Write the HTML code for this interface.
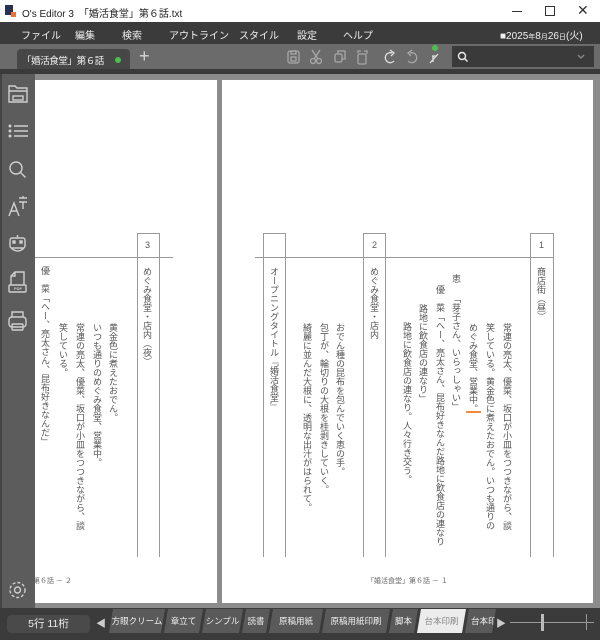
<!DOCTYPE html>
<html><head><meta charset="utf-8"><style>
*{margin:0;padding:0;box-sizing:border-box}
body{width:600px;height:640px;overflow:hidden;background:#3b3b3b;font-family:"Liberation Sans","Noto Sans CJK JP",sans-serif;position:relative}
.a{position:absolute}
.v{position:absolute;writing-mode:vertical-rl;font-size:9px;line-height:10px;color:#555;white-space:nowrap;font-family:"Liberation Sans","Noto Sans CJK JP",sans-serif}
.m{position:absolute;top:27px;font-size:10px;color:#f0f0f0}
.ln{position:absolute;background:#9a9a9a}
.tab{position:absolute;top:609px;height:24px;background:#5a5a5a;color:#f0f0f0;font-size:8.5px;line-height:24px;text-align:center;white-space:nowrap;overflow:hidden;clip-path:polygon(4px 0,100% 0,calc(100% - 4px) 100%,0 100%)}
svg{position:absolute}
</style></head><body>
<div class="a" style="left:0;top:0;width:600px;height:22px;background:#fff"></div>
<div class="a" style="left:5px;top:5px;width:8px;height:10px;background:#2a3050"></div>
<div class="a" style="left:11px;top:12px;width:5px;height:5px;background:#e8743a"></div>
<div class="a" style="left:22px;top:5px;font-size:10px;color:#222">O's Editor 3　「婚活食堂」第６話.txt</div>
<div class="a" style="left:512px;top:11px;width:10px;height:1px;background:#333"></div>
<div class="a" style="left:545px;top:6px;width:10px;height:10px;border:1px solid #333"></div>
<div class="a" style="left:577px;top:2px;font-size:14px;color:#333">✕</div>
<div class="a" style="left:0;top:22px;width:600px;height:22px;background:#3b3b3b"></div>
<div class="m" style="left:21px">ファイル</div>
<div class="m" style="left:75px">編集</div>
<div class="m" style="left:122px">検索</div>
<div class="m" style="left:169px">アウトライン</div>
<div class="m" style="left:239px">スタイル</div>
<div class="m" style="left:297px">設定</div>
<div class="m" style="left:343px">ヘルプ</div>
<div class="m" style="left:500px;font-size:10px">■2025<span style="font-size:7px">年</span>8<span style="font-size:7px">月</span>26<span style="font-size:7px">日</span>(火)</div>
<div class="a" style="left:0;top:44px;width:600px;height:25px;background:#6b6b6b"></div>
<div class="a" style="left:17px;top:49px;width:113px;height:20px;background:#474747;border-radius:4px 4px 0 0"></div>
<div class="a" style="left:22px;top:53px;font-size:9.5px;letter-spacing:-0.4px;color:#f2f2f2">「婚活食堂」第６話</div>
<div class="a" style="left:115px;top:57px;width:6px;height:6px;border-radius:50%;background:#4cc04c"></div>
<div class="a" style="left:139px;top:46px;font-size:18px;color:#d8d8d8">+</div>
<svg style="left:284px;top:47px" width="160" height="20" fill="none" stroke="#a8a8a8" stroke-width="1.3">
<rect x="4" y="4" width="11" height="12" rx="2"/><rect x="7" y="4" width="5" height="3"/><rect x="7" y="10" width="5" height="4"/>
<circle cx="29" cy="14" r="2.5"/><circle cx="35" cy="14" r="2.5"/><path d="M30 12 L36 3 M34 12 L28 3"/>
<rect x="51" y="7" width="7" height="8" rx="1.5"/><path d="M54 7 V4 h7 v8 h-3"/>
<rect x="74" y="7" width="8" height="10" rx="1.5"/><path d="M74 6 V4 h3 M80 4 h3 v3"/>
<path d="M108 6 a5 5 0 1 0 2 8 M106 3 l4 3 -3 3" stroke="#e0e0e0"/>
<path d="M126 6 a5 5 0 1 1 -2 8 M128 3 l-4 3 3 3"/>
<path d="M146 16 l8 -9 M148 9 h4 M149 9 v6" stroke="#e0e0e0"/>
</svg>
<div class="a" style="left:432px;top:45px;width:6px;height:6px;border-radius:50%;background:#4cc04c"></div>
<div class="a" style="left:452px;top:46px;width:142px;height:21px;background:#3a3a3a"></div>
<svg style="left:457px;top:50px" width="140" height="14" fill="none" stroke="#eee" stroke-width="1.4"><circle cx="5" cy="6" r="3.5"/><path d="M7.5 8.5 l3 3"/><path d="M121 5 l3 3 3-3" stroke="#888"/></svg>
<div class="a" style="left:0;top:69px;width:600px;height:5px;background:#3a3a3a"></div>
<div class="a" style="left:35px;top:74px;width:565px;height:534px;background:#8c8c8c"></div>
<div class="a" style="left:35px;top:80px;width:182px;height:523px;background:#fff;overflow:hidden">
  <div class="ln" style="left:102px;top:153px;width:1px;height:324px"></div>
  <div class="ln" style="left:124px;top:153px;width:1px;height:324px"></div>
  <div class="ln" style="left:102px;top:153px;width:23px;height:1px"></div>
  <div class="ln" style="left:0;top:177px;width:138px;height:1px"></div>
  <div class="a" style="left:110px;top:160px;font-size:9px;color:#555">3</div>
  <div class="v" style="left:107px;top:187px">めぐみ食堂・店内（夜）</div>
  <div class="v" style="left:73px;top:243px">黄金色に煮えたおでん。</div>
  <div class="v" style="left:57px;top:243px">いつも通りのめぐみ食堂、営業中。</div>
  <div class="v" style="left:40px;top:243px">常連の亮太、優菜、坂口が小皿をつつきながら、談</div>
  <div class="v" style="left:23px;top:243px">笑している。</div>
  <div class="v" style="left:5px;top:186px">優　菜「へー、亮太さん、昆布好きなんだ」</div>
  <div class="a" style="left:-2px;top:496px;font-size:7px;color:#666">第６話 － ２</div>
</div>
<div class="a" style="left:222px;top:80px;width:371px;height:523px;background:#fff">
  <div class="ln" style="left:308px;top:153px;width:1px;height:324px"></div>
  <div class="ln" style="left:331px;top:153px;width:1px;height:324px"></div>
  <div class="ln" style="left:308px;top:153px;width:23px;height:1px"></div>
  <div class="ln" style="left:141px;top:153px;width:1px;height:324px"></div>
  <div class="ln" style="left:163px;top:153px;width:1px;height:324px"></div>
  <div class="ln" style="left:141px;top:153px;width:23px;height:1px"></div>
  <div class="ln" style="left:41px;top:153px;width:1px;height:324px"></div>
  <div class="ln" style="left:63px;top:153px;width:1px;height:324px"></div>
  <div class="ln" style="left:41px;top:153px;width:23px;height:1px"></div>
  <div class="ln" style="left:33px;top:177px;width:299px;height:1px"></div>
  <div class="a" style="left:317px;top:160px;font-size:9px;color:#555">1</div>
  <div class="a" style="left:150px;top:160px;font-size:9px;color:#555">2</div>
  <div class="v" style="left:314px;top:187px">商店街（昼）</div>
  <div class="v" style="left:280px;top:243px">常連の亮太、優菜、坂口が小皿をつつきながら、談</div>
  <div class="v" style="left:263px;top:243px">笑している。黄金色に煮えたおでん。いつも通りの</div>
  <div class="v" style="left:246px;top:243px">めぐみ食堂、営業中。</div>
  <div class="a" style="left:244px;top:331px;width:15px;height:2px;background:#f08a3c"></div>
  <div class="v" style="left:229px;top:194px">恵</div>
  <div class="v" style="left:229px;top:214px">「芽子さん、いらっしゃい」</div>
  <div class="v" style="left:213px;top:205px">優　菜「へー、亮太さん、昆布好きなんだ路地に飲食店の連なり</div>
  <div class="v" style="left:196px;top:224px">路地に飲食店の連なり」</div>
  <div class="v" style="left:180px;top:242px">路地に飲食店の連なり。人々行き交う。</div>
  <div class="v" style="left:147px;top:187px">めぐみ食堂・店内</div>
  <div class="v" style="left:113px;top:243px">おでん種の昆布を包んでいく恵の手。</div>
  <div class="v" style="left:97px;top:243px">包丁が、輪切りの大根を桂剥きしていく。</div>
  <div class="v" style="left:80px;top:243px">綺麗に並んだ大根に、透明な出汁がはられて。</div>
  <div class="v" style="left:47px;top:187px">オープニングタイトル『婚活食堂』</div>
  <div class="a" style="left:145px;top:496px;font-size:7px;color:#666">「婚活食堂」第６話 － １</div>
</div>
<div class="a" style="left:0;top:74px;width:35px;height:534px;background:#5c5c5c;border-left:2px solid #444"></div>
<svg style="left:0;top:74px" width="35" height="530" fill="none" stroke="#cfcfcf" stroke-width="1.4">
<path d="M9 12 h6 l2 2 h10 v14 h-18 z M9 17 h18"/><rect x="13" y="22" width="10" height="4"/>
<circle cx="10" cy="52" r="0.8" fill="#cfcfcf"/><circle cx="10" cy="57" r="0.8" fill="#cfcfcf"/><circle cx="10" cy="62" r="0.8" fill="#cfcfcf"/><path d="M14 52 h14 M14 57 h14 M14 62 h14"/>
<circle cx="16" cy="94" r="6"/><path d="M20.5 98.5 l5 5"/>
<path d="M9 142 l5 -13 5 13 M11 137 h6 M19 124 h8 M23 122 v2 M19 128 h8 M23 128 v7"/>
<rect x="10" y="164" width="15" height="10" rx="2"/><path d="M11 174 q7 6 13 0"/><rect x="13" y="167" width="2" height="2" fill="#cfcfcf"/><rect x="20" y="167" width="2" height="2" fill="#cfcfcf"/><path d="M17.5 164 v-3"/>
<path d="M11 211 v-9 l4 -4 h9 v13 M15 198 v4 h-4"/><rect x="9" y="211" width="17" height="7" rx="1"/>
<path d="M12 243 v-5 h11 v5"/><rect x="9" y="243" width="17" height="10" rx="3"/><rect x="12" y="250" width="11" height="6" rx="1"/>
<circle cx="17.5" cy="516" r="3"/><circle cx="17.5" cy="516" r="7.5" stroke-dasharray="3 2"/>
</svg>
<div class="a" style="left:14px;top:286px;font-size:4px;color:#cfcfcf;font-weight:bold">PDF</div>
<div class="a" style="left:0;top:608px;width:600px;height:32px;background:#3b3b3b"></div>
<div class="a" style="left:7px;top:615px;width:83px;height:18px;background:#4a4a4a;border-radius:4px;color:#f0f0f0;font-size:10.5px;text-align:center;line-height:18px">5行 11桁</div>
<div class="a" style="left:96px;top:615px;color:#ccc;font-size:10px">◀</div>
<div class="tab" style="left:109px;width:56px">方眼クリーム</div>
<div class="tab" style="left:164px;width:39px">章立て</div>
<div class="tab" style="left:202px;width:41px">シンプル</div>
<div class="tab" style="left:242px;width:28px">読書</div>
<div class="tab" style="left:269px;width:54px">原稿用紙</div>
<div class="tab" style="left:322px;width:68px">原稿用紙印刷</div>
<div class="tab" style="left:389px;width:29px">脚本</div>
<div class="tab" style="left:417px;width:49px;background:#ececec;color:#888">台本印刷</div>
<div class="tab" style="left:465px;width:31px;text-align:left;padding-left:6px">台本印</div>
<div class="a" style="left:496px;top:615px;color:#ccc;font-size:10px">▶</div>
<div class="a" style="left:510px;top:622px;width:84px;height:1px;background:#999"></div>
<div class="a" style="left:541px;top:614px;width:3px;height:17px;background:#bbb"></div>
<div class="a" style="left:586px;top:614px;width:1px;height:16px;background:#999"></div>
</body></html>
